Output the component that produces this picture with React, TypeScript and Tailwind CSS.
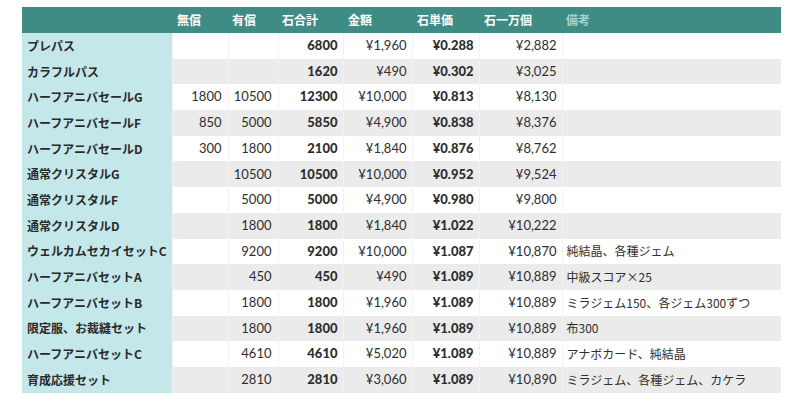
import React from 'react'

type Row = {
    name: string
    free: string
    paid: string
    total: string
    price: string
    unit: string
    per10k: string
    note: string
}

const rows: Row[] = [
    { name: 'プレパス', free: '', paid: '', total: '6800', price: '¥1,960', unit: '¥0.288', per10k: '¥2,882', note: '' },
    { name: 'カラフルパス', free: '', paid: '', total: '1620', price: '¥490', unit: '¥0.302', per10k: '¥3,025', note: '' },
    { name: 'ハーフアニバセールG', free: '1800', paid: '10500', total: '12300', price: '¥10,000', unit: '¥0.813', per10k: '¥8,130', note: '' },
    { name: 'ハーフアニバセールF', free: '850', paid: '5000', total: '5850', price: '¥4,900', unit: '¥0.838', per10k: '¥8,376', note: '' },
    { name: 'ハーフアニバセールD', free: '300', paid: '1800', total: '2100', price: '¥1,840', unit: '¥0.876', per10k: '¥8,762', note: '' },
    { name: '通常クリスタルG', free: '', paid: '10500', total: '10500', price: '¥10,000', unit: '¥0.952', per10k: '¥9,524', note: '' },
    { name: '通常クリスタルF', free: '', paid: '5000', total: '5000', price: '¥4,900', unit: '¥0.980', per10k: '¥9,800', note: '' },
    { name: '通常クリスタルD', free: '', paid: '1800', total: '1800', price: '¥1,840', unit: '¥1.022', per10k: '¥10,222', note: '' },
    { name: 'ウェルカムセカイセットC', free: '', paid: '9200', total: '9200', price: '¥10,000', unit: '¥1.087', per10k: '¥10,870', note: '純結晶、各種ジェム' },
    { name: 'ハーフアニバセットA', free: '', paid: '450', total: '450', price: '¥490', unit: '¥1.089', per10k: '¥10,889', note: '中級スコア×25' },
    { name: 'ハーフアニバセットB', free: '', paid: '1800', total: '1800', price: '¥1,960', unit: '¥1.089', per10k: '¥10,889', note: 'ミラジェム150、各ジェム300ずつ' },
    { name: '限定服、お裁縫セット', free: '', paid: '1800', total: '1800', price: '¥1,960', unit: '¥1.089', per10k: '¥10,889', note: '布300' },
    { name: 'ハーフアニバセットC', free: '', paid: '4610', total: '4610', price: '¥5,020', unit: '¥1.089', per10k: '¥10,889', note: 'アナボカード、純結晶' },
    { name: '育成応援セット', free: '', paid: '2810', total: '2810', price: '¥3,060', unit: '¥1.089', per10k: '¥10,890', note: 'ミラジェム、各種ジェム、カケラ' },
]

// 数字セル
const num = "px-[5px] text-right border-l border-[#f2f2f2] text-[13px] font-['Lato',sans-serif]"

function App() {
    return (
        <div className="w-[800px] h-[410px] bg-white pt-[7px] pl-[22px] text-[12px] text-[#2e2e2e] font-['Noto_Sans_CJK_JP',sans-serif]">
            <table className="table-fixed border-collapse w-[759px]">
                <colgroup>
                    <col className="w-[150px]" />
                    <col className="w-[56px]" />
                    <col className="w-[50px]" />
                    <col className="w-[65px]" />
                    <col className="w-[69px]" />
                    <col className="w-[67px]" />
                    <col className="w-[83px]" />
                    <col className="w-[219px]" />
                </colgroup>
                <thead>
                    <tr className="h-[26px] bg-[#3f8c85] text-white text-left">
                        <th className="px-[5px]"></th>
                        <th className="px-[5px] font-bold">無償</th>
                        <th className="px-[4px] font-bold">有償</th>
                        <th className="px-[4px] font-bold">石合計</th>
                        <th className="px-[5px] font-bold">金額</th>
                        <th className="px-[5px] font-bold">石単価</th>
                        <th className="px-[5px] font-bold">石一万個</th>
                        <th className="px-[4px] font-bold text-[#a3d3cf]">備考</th>
                    </tr>
                </thead>
                <tbody>
                    {rows.map((r, i) => (
                        <tr key={r.name} className={i % 2 === 1 ? 'h-[25.7px] bg-[#ebebeb]' : 'h-[25.7px] bg-white'}>
                            <td className="bg-[#c4e8ea] px-[5px] font-bold whitespace-nowrap text-[#2a2a2a]">{r.name}</td>
                            <td className={num + ' pr-[6px]'}>{r.free}</td>
                            <td className={num + ' pr-[6px]'}>{r.paid}</td>
                            <td className={num + ' font-black'}>{r.total}</td>
                            <td className={num}>{r.price}</td>
                            <td className={num + ' font-black'}>{r.unit}</td>
                            <td className={num}>{r.per10k}</td>
                            <td className="px-[4px] text-left whitespace-nowrap border-l border-[#f2f2f2]">{r.note}</td>
                        </tr>
                    ))}
                </tbody>
            </table>
        </div>
    )
}

export default App
